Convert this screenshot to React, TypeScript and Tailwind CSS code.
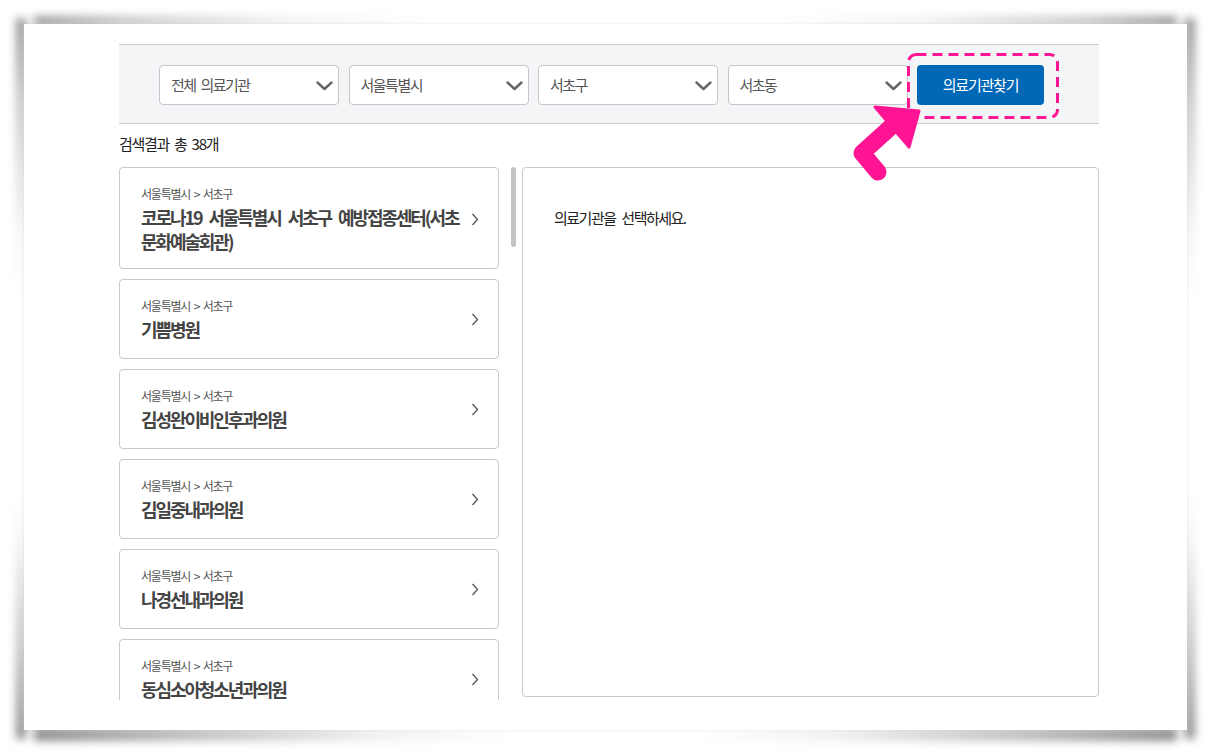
import React from "react";

const items = [
  "코로나19 서울특별시 서초구 예방접종센터(서초 문화예술회관)",
  "기쁨병원",
  "김성완이비인후과의원",
  "김일중내과의원",
  "나경선내과의원",
  "동심소아청소년과의원",
];

function SelectBox({ label }: { label: string }) {
  return (
    <div className="w-[180px] h-[40px] bg-white border border-[#c5c6cc] rounded-[4px] flex items-center justify-between pl-[11px] pr-[5px]">
      <span className="text-[15px] tracking-[-1.5px] [word-spacing:3px] text-[#555]">{label}</span>
      <svg width="17" height="10" viewBox="0 0 17 10" className="mt-[1px]">
        <polyline points="1.5,1.5 8.5,8 15.5,1.5" fill="none" stroke="#666" strokeWidth="2.4" strokeLinecap="round" strokeLinejoin="round" />
      </svg>
    </div>
  );
}

function Card({ name, first }: { name: string; first?: boolean }) {
  return (
    <div
      className={
        "w-[380px] shrink-0 bg-white border border-[#c8c9cd] rounded-[4px] pl-[21px] pr-[21px] pt-[17px] flex items-center justify-between " +
        (first ? "pb-[15px]" : "pb-[17px]")
      }
    >
      <div className="flex flex-col">
        <div className="text-[12px] leading-[18px] tracking-[-1.2px] [word-spacing:2px] text-[#555]">서울특별시 &gt; 서초구</div>
        <div className="mt-[2px] w-[330px] text-[18px] leading-[24px] font-bold tracking-[-2.1px] [word-spacing:5px] text-[#444] break-keep">{name}</div>
      </div>
      <svg width="8" height="13" viewBox="0 0 8 13" className="shrink-0">
        <polyline points="1.5,1 6.5,6.5 1.5,12" fill="none" stroke="#555" strokeWidth="1.3" />
      </svg>
    </div>
  );
}

export default function App() {
  return (
    <div className="w-[1211px] h-[754px] bg-white relative overflow-hidden font-['Noto_Sans_CJK_KR','Noto_Sans',sans-serif] pt-[24px] pl-[24px]">
      <div className="relative isolate w-[1163px] h-[706px]">
        {/* page-curl shadows */}
        <div className="absolute left-[10px] right-[10px] -top-[8px] h-[10px] blur-[4px] -z-10 bg-[linear-gradient(to_right,rgba(0,0,0,0.4),rgba(0,0,0,0.22)_8%,rgba(0,0,0,0.05)_22%,transparent_35%,transparent_65%,rgba(0,0,0,0.05)_78%,rgba(0,0,0,0.22)_92%,rgba(0,0,0,0.4))]" />
        <div className="absolute left-[10px] right-[10px] -bottom-[11px] h-[13px] blur-[4px] -z-10 bg-[linear-gradient(to_right,rgba(0,0,0,0.45),rgba(0,0,0,0.28)_12%,rgba(0,0,0,0.06)_30%,transparent_42%,transparent_58%,rgba(0,0,0,0.06)_70%,rgba(0,0,0,0.28)_88%,rgba(0,0,0,0.45))]" />
        <div className="absolute -left-[8px] w-[10px] -top-[6px] -bottom-[9px] blur-[4px] -z-10 bg-[linear-gradient(to_bottom,rgba(0,0,0,0.42),rgba(0,0,0,0.22)_12%,rgba(0,0,0,0.04)_30%,transparent_40%,transparent_65%,rgba(0,0,0,0.04)_72%,rgba(0,0,0,0.25)_88%,rgba(0,0,0,0.45))]" />
        <div className="absolute -right-[8px] w-[10px] -top-[6px] -bottom-[9px] blur-[4px] -z-10 bg-[linear-gradient(to_bottom,rgba(0,0,0,0.42),rgba(0,0,0,0.22)_12%,rgba(0,0,0,0.04)_30%,transparent_40%,transparent_65%,rgba(0,0,0,0.04)_72%,rgba(0,0,0,0.25)_88%,rgba(0,0,0,0.45))]" />
        <div className="absolute inset-0 shadow-[0_0_3px_rgba(0,0,0,0.1)] -z-10" />

        <div className="relative w-full h-full bg-white pl-[95px] pt-[20px]">
          <div className="w-[980px]">
            {/* filter bar */}
            <div className="relative h-[80px] bg-[#f4f5f7] border-y border-[#c8c9cf] flex items-center pl-[40px] pt-[2px] gap-[9.5px]">
              <SelectBox label="전체 의료기관" />
              <SelectBox label="서울특별시" />
              <SelectBox label="서초구" />
              <SelectBox label="서초동" />
              <div className="relative">
                <button className="w-[127px] h-[40px] bg-[#0068b7] rounded-[4px] text-white text-[15px] tracking-[-1.2px]">
                  의료기관찾기
                </button>
                <svg className="absolute -left-[10px] -top-[12px]" width="152" height="66" viewBox="0 0 152 66">
                  <rect x="1.5" y="1.5" width="149" height="63" rx="8" fill="none" stroke="#ff1493" strokeWidth="3" strokeDasharray="10 6" />
                </svg>
              </div>
            </div>

            <div className="mt-[10px] text-[15px] leading-[20px] tracking-[-1.3px] [word-spacing:3px] text-[#222]">검색결과 총 38개</div>

            <div className="mt-[13px] flex items-start">
              <div className="w-[380px] h-[533px] overflow-hidden flex flex-col gap-[10px]">
                {items.map((n, i) => (
                  <Card key={n} name={n} first={i === 0} />
                ))}
              </div>
              <div className="ml-[12px] w-[5px] h-[80px] rounded-full bg-[#c4c4c4]" />
              <div className="ml-[6px] w-[577px] h-[530px] border border-[#c8c9cd] rounded-[4px] pl-[31px] pt-[40px]">
                <div className="text-[15px] leading-[20px] tracking-[-1.5px] [word-spacing:4px] text-[#222]">의료기관을 선택하세요.</div>
              </div>
            </div>
          </div>
        </div>

        {/* pink arrow */}
        <svg className="absolute left-[816px] top-[76px]" width="110" height="100" viewBox="816 76 110 100">
          <path d="M 893 125 L 862 153 L 878 172" fill="none" stroke="#ff1493" strokeWidth="17" strokeLinejoin="round" strokeLinecap="round" transform="translate(-24 -24)" />
          <polygon points="875,107 919,111 909,147" fill="#ff1493" strokeLinejoin="round" stroke="#ff1493" strokeWidth="3" transform="translate(-24 -24)" />
        </svg>
      </div>
    </div>
  );
}
